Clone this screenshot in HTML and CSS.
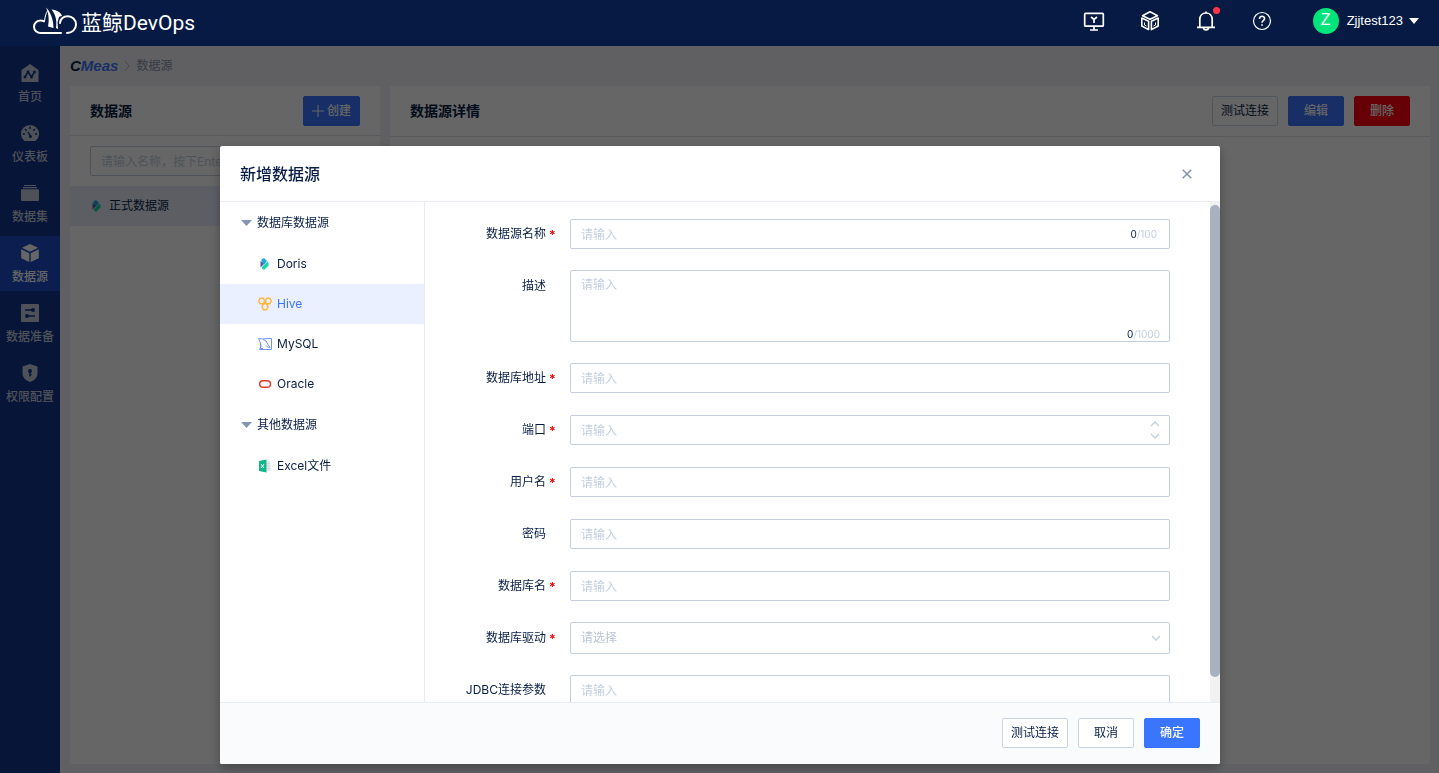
FILE: index.html
```html
<!DOCTYPE html>
<html lang="zh-CN">
<head>
<meta charset="utf-8">
<title>蓝鲸DevOps - 数据源</title>
<link rel="stylesheet" href="styles.css">
</head>
<body>
<header class="topbar">
  <a class="brand" href="#">
    <svg class="brand-icon" width="44" height="28" viewBox="0 0 44 28" fill="none" stroke="#fff" stroke-width="2" stroke-linecap="round">
      <path d="M28 26H8C4 26 1 23.400 1 19.800C1 16 4 13.500 8 13.600C9 13.600 10 13.800 11 14.300"/>
      <path d="M34 26C39 26 43 22.500 43 17.500C43 12.500 39 9.200 35 9.200C30 9.200 27.500 12 27 16"/>
      <path d="M11.500 14C12 9.500 13 6 14.500 4" stroke-width="1"/>
      <path d="M13 .5C17 4 20.500 12 20.500 21L15 19.500C16.500 12 15.500 6 13 .5Z" fill="#fff" stroke="none"/>
      <path d="M18.500 2.500C24 3 28.500 6 29 9C25 9 26 12 24.500 15L25 22L23 21C24 14 23 8 18.500 2.500Z" fill="#fff" stroke="none"/>
    </svg>
    <span class="brand-text">蓝鲸DevOps</span>
  </a>
  <nav class="tools" aria-label="工具">
    <button class="tool" type="button" aria-label="控制台">
      <svg width="22" height="22" viewBox="0 0 22 22" fill="none" stroke="#fff" stroke-width="1.700"><rect x="1.700" y="3.300" width="18.600" height="12.900" rx="1"/><path d="M11 16.500V20M7 20H15M8 7L11 9.500L14 7M11 9.500V13"/></svg>
    </button>
    <button class="tool" type="button" aria-label="服务">
      <svg width="22" height="22" viewBox="0 0 22 22" fill="none" stroke="#fff" stroke-width="1.600" stroke-linejoin="round"><path d="M11 1.800L18.500 5.700L11 9.200L3.500 5.700ZM2.800 8L9.600 11.200V19.600L2.800 16ZM19.200 8L12.400 11.200V19.600L19.200 16Z"/><path d="M5.500 12.500V15L7.500 16M16.500 12.500V15L14.500 16" stroke-width="1"/></svg>
    </button>
    <button class="tool" type="button" aria-label="通知">
      <svg width="22" height="22" viewBox="0 0 22 22" fill="none" stroke="#fff" stroke-width="1.700"><path d="M2 17.300H20M4.800 17V9.500C4.800 5.700 7.400 3 11 3S17.200 5.700 17.200 9.500V17M11 3V1.500M8.500 18C8.800 20.500 13.200 20.500 13.500 18"/></svg>
      <span class="dot"></span>
    </button>
    <button class="tool" type="button" aria-label="帮助">
      <svg width="22" height="22" viewBox="0 0 22 22" fill="none" stroke="#fff" stroke-width="1.200"><circle cx="11" cy="11" r="8.500"/><path d="M8.500 9C8.500 5.300 13.700 5.500 13.500 8.700C13.400 10.500 11 10.600 11 12.700M11 14.200V15.700" stroke-width="1.600"/></svg>
    </button>
  </nav>
  <button class="user" type="button">
    <span class="avatar">Z</span>
    <span class="user-name">Zjjtest123</span>
    <svg width="10" height="6" viewBox="0 0 10 6"><path d="M0 0H10L5 6Z" fill="#fff"/></svg>
  </button>
</header>

<div class="shell">
  <nav class="sidebar" aria-label="主导航">
    <a class="side-item" href="#">
      <svg width="20" height="20" viewBox="0 0 20 20"><path d="M10 1L18.500 7V18.500Q18.500 19 18 19H2Q1.500 19 1.500 18.500V7Z" fill="currentColor"/><path d="M5 14L8 9L11.500 14L14.500 9" fill="none" stroke="#12358f" stroke-width="1.500"/><g fill="#12358f"><circle cx="5" cy="14" r="1.400"/><circle cx="8" cy="9" r="1.400"/><circle cx="11.500" cy="14" r="1.400"/><circle cx="14.500" cy="9" r="1.400"/></g></svg>
      <span>首页</span>
    </a>
    <a class="side-item" href="#">
      <svg width="20" height="20" viewBox="0 0 20 20"><path d="M4.500 18A9 9 0 1 1 15.500 18Z" fill="currentColor"/><path d="M10 3.500V6M5 6L6.700 7.700M15 6L13.300 7.700M2.800 11H5M17.200 11H15M8 9L10.500 13.500" stroke="#12358f" stroke-width="1.500"/><circle cx="10.500" cy="13.500" r="1.500" fill="#12358f"/></svg>
      <span>仪表板</span>
    </a>
    <a class="side-item" href="#">
      <svg width="20" height="20" viewBox="0 0 20 20" fill="currentColor"><path d="M4 2H16V3H4ZM3 4H17V5.200H3ZM2 6.200H18Q19 6.200 19 7.200V17Q19 18 18 18H2Q1 18 1 17V7.200Q1 6.200 2 6.200Z"/></svg>
      <span>数据集</span>
    </a>
    <a class="side-item is-active" href="#" aria-current="page">
      <svg width="20" height="20" viewBox="0 0 20 20" fill="currentColor"><path d="M10 1L18 4.800L10 8.700L2 4.800ZM1.200 6.200L9.300 10.200V19L1.200 15.200ZM18.800 6.200L10.700 10.200V19L18.800 15.200Z"/></svg>
      <span>数据源</span>
    </a>
    <a class="side-item" href="#">
      <svg width="20" height="20" viewBox="0 0 20 20"><rect x="1" y="1" width="18" height="18" rx="1" fill="currentColor"/><path d="M5 7H13M7 13H15" stroke="#12358f" stroke-width="1.600"/><circle cx="13" cy="7" r="2" fill="#12358f"/><circle cx="7" cy="13" r="2" fill="#12358f"/></svg>
      <span>数据准备</span>
    </a>
    <a class="side-item" href="#">
      <svg width="20" height="20" viewBox="0 0 20 20"><path d="M10 1L17.500 3.500V11Q17.500 16 10 19Q2.500 16 2.500 11V3.500Z" fill="currentColor"/><circle cx="10" cy="8" r="2" fill="#12358f"/><path d="M10 9V13.500M10 11.700H11.500" stroke="#12358f" stroke-width="1.500"/></svg>
      <span>权限配置</span>
    </a>
  </nav>

  <main class="page">
    <nav class="crumbs" aria-label="面包屑">
      <a class="crumb-logo" href="#"><span class="crumb-c">C</span>Meas</a>
      <svg width="6" height="10" viewBox="0 0 6 10" fill="none" stroke="#b4bac6"><path d="M1 0L5 5L1 10"/></svg>
      <span class="crumb-now">数据源</span>
    </nav>
    <div class="panels">
      <section class="panel panel-list">
        <div class="panel-head">
          <h2>数据源</h2>
          <button class="btn btn-primary btn-create" type="button"><svg width="12" height="12" viewBox="0 0 12 12" stroke="currentColor"><path d="M6 0V12M0 6H12"/></svg>创建</button>
        </div>
        <div class="search"><input class="text-input" type="text" aria-label="搜索数据源" placeholder="请输入名称，按下Enter键搜索"></div>
        <a class="source-row" href="#">
          <svg width="14" height="14" viewBox="0 0 14 14"><path d="M3.500 2.500L6 1L8.500 3.500V5L6 7.500L3.500 5Z" fill="#21a9d4"/><path d="M2.500 4L6 7L2.500 10.500Z" fill="#5457a6"/><path d="M9.500 4.500L10.500 6V8.500L6 13L4 11.500V10Z" fill="#12d8a8"/></svg>
          正式数据源
        </a>
      </section>
      <section class="panel panel-detail">
        <div class="panel-head">
          <h2>数据源详情</h2>
          <div class="actions">
            <button class="btn btn-wide" type="button">测试连接</button>
            <button class="btn btn-primary" type="button">编辑</button>
            <button class="btn btn-danger" type="button">删除</button>
          </div>
        </div>
      </section>
    </div>
  </main>
</div>

<div class="overlay">
  <div class="modal" role="dialog" aria-modal="true" aria-labelledby="modal-title">
    <div class="modal-head">
      <h1 id="modal-title">新增数据源</h1>
      <button class="close" type="button" aria-label="关闭"><svg width="10" height="10" viewBox="0 0 10 10" fill="none" stroke="#8292ad" stroke-width="1.500"><path d="M.7 .7L9.300 9.300M9.300 .7L.7 9.300"/></svg></button>
    </div>
    <div class="modal-body">
      <div class="tree">
        <button class="tree-group" type="button"><svg width="11" height="6" viewBox="0 0 11 6"><path d="M0 0H11L5.500 6Z" fill="#8496b2"/></svg>数据库数据源</button>
        <button class="tree-item" type="button">
          <svg width="14" height="14" viewBox="0 0 14 14"><path d="M3.500 2.500L6 1L8.500 3.500V5L6 7.500L3.500 5Z" fill="#21a9d4"/><path d="M2.500 4L6 7L2.500 10.500Z" fill="#5457a6"/><path d="M9.500 4.500L10.500 6V8.500L6 13L4 11.500V10Z" fill="#12d8a8"/></svg>
          Doris
        </button>
        <button class="tree-item is-active" type="button">
          <svg width="14" height="14" viewBox="0 0 14 14" fill="none" stroke="#ffb83d" stroke-width="1.500"><path d="M2.200 1.200H5.200L6.700 4L5.200 6.800H2.200L.7 4ZM8.800 1.200H11.800L13.300 4L11.800 6.800H8.800L7.300 4ZM5.500 6.800H8.500L10 9.800L8.500 12.800H5.500L4 9.800Z"/></svg>
          Hive
        </button>
        <button class="tree-item" type="button">
          <svg width="14" height="14" viewBox="0 0 14 14" fill="none" stroke="#6c96f7" stroke-width="1"><path d="M9 1.500H13.500V12.500H1.500L3 9.500L2.500 6L.6 1.500L4.500 2L8 4L10 7.500L12 10.500L9.500 10L8 8.500M5 2L9 1.500M2.500 6V11.500H5"/></svg>
          MySQL
        </button>
        <button class="tree-item" type="button">
          <svg width="14" height="14" viewBox="0 0 14 14" fill="none" stroke="#e13b2d" stroke-width="1.500"><rect x="1.700" y="3.700" width="10.800" height="6.600" rx="3.300"/></svg>
          Oracle
        </button>
        <button class="tree-group" type="button"><svg width="11" height="6" viewBox="0 0 11 6"><path d="M0 0H11L5.500 6Z" fill="#8496b2"/></svg>其他数据源</button>
        <button class="tree-item" type="button">
          <svg width="14" height="14" viewBox="0 0 14 14"><path d="M8 2H12.500V12H8Z" fill="#e6e8ea"/><path d="M8.500 4.500H12M8.500 7H12M8.500 9.500H12" stroke="#c9cdd2" stroke-width=".6"/><path d="M1 2L8.500 .5V13.500L1 12Z" fill="#10b68b"/><path d="M3 5L6 9M6 5L3 9" stroke="#fff"/></svg>
          Excel文件
        </button>
      </div>
      <form class="form">
        <div class="row">
          <label class="required" for="f-name">数据源名称</label>
          <div class="field">
            <input class="text-input" id="f-name" type="text" placeholder="请输入">
            <span class="count count-input"><b>0</b>/100</span>
          </div>
        </div>
        <div class="row">
          <label for="f-desc">描述</label>
          <div class="field">
            <textarea class="text-input" id="f-desc" placeholder="请输入"></textarea>
            <span class="count count-area"><b>0</b>/1000</span>
          </div>
        </div>
        <div class="row">
          <label class="required" for="f-host">数据库地址</label>
          <div class="field"><input class="text-input" id="f-host" type="text" placeholder="请输入"></div>
        </div>
        <div class="row">
          <label class="required" for="f-port">端口</label>
          <div class="field">
            <input class="text-input" id="f-port" type="number" placeholder="请输入">
            <svg class="stepper" width="10" height="18" viewBox="0 0 10 18" fill="none" stroke="#c4cfdf" stroke-width="1.300"><path d="M1 5L5 1L9 5M1 13L5 17L9 13"/></svg>
          </div>
        </div>
        <div class="row">
          <label class="required" for="f-user">用户名</label>
          <div class="field"><input class="text-input" id="f-user" type="text" placeholder="请输入"></div>
        </div>
        <div class="row">
          <label for="f-pass">密码</label>
          <div class="field"><input class="text-input" id="f-pass" type="password" placeholder="请输入"></div>
        </div>
        <div class="row">
          <label class="required" for="f-db">数据库名</label>
          <div class="field"><input class="text-input" id="f-db" type="text" placeholder="请输入"></div>
        </div>
        <div class="row">
          <label class="required" for="f-driver">数据库驱动</label>
          <div class="field">
            <select class="text-input" id="f-driver"><option>请选择</option></select>
            <svg class="chevron" width="10" height="6" viewBox="0 0 10 6" fill="none" stroke="#c4cfdf" stroke-width="1.300"><path d="M1 1L5 5L9 1"/></svg>
          </div>
        </div>
        <div class="row">
          <label for="f-jdbc">JDBC连接参数</label>
          <div class="field"><input class="text-input" id="f-jdbc" type="text" placeholder="请输入"></div>
        </div>
      </form>
      <div class="track"><div class="thumb"></div></div>
    </div>
    <div class="modal-foot">
      <button class="btn btn-wide" type="button">测试连接</button>
      <button class="btn" type="button">取消</button>
      <button class="btn btn-primary" type="button">确定</button>
    </div>
  </div>
</div>
</body>
</html>
```
FILE: styles.css
```css
* { box-sizing: border-box; }

body {
  margin: 0;
  height: 100vh;
  display: flex;
  flex-direction: column;
  overflow: hidden;
  background: #eff1f5;
  color: #081e47;
  font: 12px/20px Inter, "Noto Sans CJK SC", sans-serif;
}

button, input, select, textarea { font: inherit; color: inherit; }
button { padding: 0; border: 0; background: none; cursor: pointer; }
a { color: inherit; text-decoration: none; }
h1, h2 { margin: 0; font-weight: 500; }
svg { flex: none; display: block; }

/* Top bar */
.topbar {
  flex: none;
  height: 46px;
  display: flex;
  align-items: center;
  padding: 0 20px 0 33px;
  background: #061a43;
  color: #fff;
}
.brand { display: flex; align-items: center; gap: 4px; margin-right: auto; }
.brand-icon { margin-bottom: 4px; }
.brand-text { font: 400 21px/28px Roboto, "Noto Sans CJK SC", sans-serif; }
.tools { display: flex; gap: 34px; margin-bottom: 4px; }
.tool { position: relative; width: 22px; height: 22px; }
.dot { position: absolute; top: -3px; right: -3px; width: 7px; height: 7px; border-radius: 50%; background: #ff3346; }
.user { display: flex; align-items: center; gap: 6px; margin: 0 0 4px 40px; }
.avatar { width: 26px; height: 26px; margin-right: 2px; border-radius: 50%; background: #00e47c; font: 16px/24px "Liberation Sans", sans-serif; text-align: center; }
.user-name { font: 13px/20px "Liberation Sans", sans-serif; }

/* Page behind the dialog */
.shell { flex: 1; min-height: 0; display: flex; }
.sidebar {
  flex: none;
  width: 60px;
  padding-top: 10px;
  display: flex;
  flex-direction: column;
  gap: 5px;
  background: #12358f;
  color: #c3cad9;
}
.side-item { height: 55px; padding-top: 7px; display: flex; flex-direction: column; align-items: center; gap: 4px; font-weight: 500; }
.side-item.is-active { background: #1f4cc8; color: #fff; }
.page { flex: 1; min-width: 0; display: flex; flex-direction: column; padding: 0 9px 9px 10px; }
.crumbs { height: 40px; display: flex; align-items: center; gap: 6px; color: #8b93a6; }
.crumb-logo { color: #3a75ff; font: italic 700 15px/20px "Liberation Sans", sans-serif; }
.crumb-c { color: #081e47; }
.panels { flex: 1; min-height: 0; display: flex; gap: 10px; }
.panel { background: #fff; }
.panel-list { width: 310px; }
.panel-detail { flex: 1; }
.panel-head { height: 50px; padding: 0 20px; display: flex; align-items: center; justify-content: space-between; border-bottom: 1px solid #dde1ea; }
.panel-detail .panel-head { height: 51px; }
.panel-head h2 { font-size: 14px; font-weight: 700; }
.actions { display: flex; gap: 10px; }
.search { padding: 10px 20px; }
.source-row { height: 40px; padding: 0 20px; display: flex; align-items: center; gap: 5px; background: #e6ecfb; }

/* Buttons and fields */
.btn { min-width: 56px; height: 30px; border: 1px solid #c9d4e3; border-radius: 2px; background: #fff; }
.btn-wide { min-width: 66px; }
.btn-primary { border-color: #3a75ff; background: #3a75ff; color: #fff; font-weight: 500; }
.btn-danger { border-color: #ff0010; background: #ff0010; color: #fff; font-weight: 500; }
.btn-create { padding: 0 8px; display: flex; align-items: center; gap: 3px; }
.text-input {
  display: block;
  width: 100%;
  height: 30px;
  padding: 0 10px;
  border: 1px solid #c4d0df;
  border-radius: 2px;
  background: #fff;
  outline: 0;
}
.text-input::placeholder { color: #c4d0df; opacity: 1; }
textarea.text-input { height: 72px; padding: 4px 10px; resize: none; }
select.text-input { height: 32px; appearance: none; color: #b9c6d8; }
input[type="number"] { appearance: textfield; }

/* Dialog */
.overlay { position: fixed; inset: 46px 0 0; padding: 100px 0 0 1px; background: rgba(0, 0, 0, 0.6); }
.modal { width: 1000px; max-width: 100%; margin: 0 auto; border-radius: 2px; overflow: hidden; background: #fff; box-shadow: 0 4px 12px rgba(0, 0, 0, 0.3); }
.modal-head { height: 56px; padding: 0 28px 0 20px; display: flex; align-items: center; justify-content: space-between; border-bottom: 1px solid #e9ecf0; }
.modal-head h1 { font-size: 16px; line-height: 24px; }
.modal-body { height: 500px; display: flex; }
.tree { flex: none; width: 205px; border-right: 1px solid #e9ecf0; }
.tree-group, .tree-item { width: 100%; display: flex; align-items: center; gap: 5px; text-align: left; }
.tree-group { height: 42px; padding-left: 21px; }
.tree-item { height: 40px; padding-left: 38px; }
.tree-item.is-active { background: #eaf0ff; color: #3a75ff; }
.form { flex: 1; min-width: 0; padding: 16px 40px 0 0; display: flex; flex-direction: column; gap: 20px; overflow: hidden; }
.row { flex: none; display: flex; align-items: center; min-height: 32px; }
.row label { flex: none; align-self: flex-start; width: 145px; height: 32px; display: flex; align-items: center; justify-content: flex-end; }
.row label::after { content: ""; width: 21px; margin-left: 3px; }
.row .required::after { content: "*"; height: 18px; color: #f00000; font-weight: 700; }
.field { position: relative; flex: 1; }
.count { position: absolute; font-size: 10px; line-height: 12px; color: #c4d0df; }
.count b { color: #081e47; font-weight: 400; }
.count-input { top: 9px; right: 13px; }
.count-area { bottom: 2px; right: 10px; }
.stepper { position: absolute; top: 6px; right: 10px; }
.chevron { position: absolute; top: 13px; right: 9px; }
.track { flex: none; width: 10px; padding-top: 3px; background: #f1f1f1; }
.thumb { height: 95%; border-radius: 5px; background: #a8b1bf; }
.modal-foot { height: 62px; padding: 15px 20px; display: flex; align-items: flex-start; justify-content: flex-end; gap: 10px; border-top: 1px solid #e9ecf0; background: #fafbfd; }
```
